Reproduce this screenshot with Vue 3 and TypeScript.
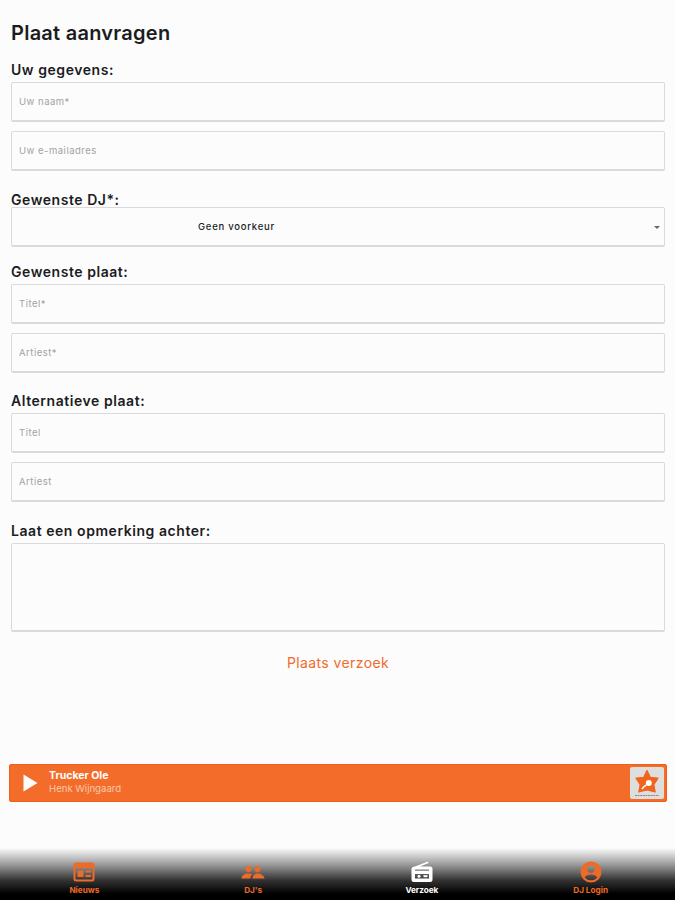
<template>
  <div class="page">
    <main class="form">
      <h1>Plaat aanvragen</h1>

      <label class="lbl first">Uw gegevens:</label>
      <input class="field" type="text" placeholder="Uw naam*" />
      <input class="field next" type="email" placeholder="Uw e-mailadres" />

      <label class="lbl dj">Gewenste DJ*:</label>
      <div class="select">
        <span>Geen voorkeur</span>
        <i class="caret"></i>
      </div>

      <label class="lbl wish">Gewenste plaat:</label>
      <input class="field" type="text" placeholder="Titel*" />
      <input class="field next" type="text" placeholder="Artiest*" />

      <label class="lbl alt">Alternatieve plaat:</label>
      <input class="field" type="text" placeholder="Titel" />
      <input class="field next" type="text" placeholder="Artiest" />

      <label class="lbl note">Laat een opmerking achter:</label>
      <textarea class="area"></textarea>

      <button class="submit" type="button">Plaats verzoek</button>
    </main>

    <section class="player">
      <svg class="play" width="15" height="18" viewBox="0 0 15 18"><path d="M0.500 0.500 L14.500 9 L0.500 17.500 Z" fill="#fff" /></svg>
      <div class="track">
        <strong>Trucker Ole</strong>
        <span>Henk Wijngaard</span>
      </div>
      <div class="logo">
        <svg width="34" height="32" viewBox="0 0 34 32">
          <path d="M17 3.500 L20.400 10.400 L28 11.200 L23.800 17.600 L25.200 25 L17 22.800 L8.800 25 L10.200 17.600 L6 11.200 L13.600 10.400 Z" fill="#f0641e" stroke="#f0641e" stroke-width="1.200" stroke-linejoin="round" />
          <circle cx="18.800" cy="16" r="3" fill="#fff" />
          <path d="M16.400 18 C14.800 18.800 13.400 20 12 22" fill="none" stroke="#fff" stroke-width="1.400" />
          <path d="M5 28.500 H29" stroke="#888" stroke-width="1.100" stroke-dasharray="2 0.600" />
        </svg>
      </div>
    </section>

    <nav class="tabs">
      <div v-for="tab in tabs" :key="tab.label" class="tab" :class="{ active: tab.active }">
        <svg width="24" height="24" viewBox="0 0 24 24" fill="currentColor" v-html="tab.icon"></svg>
        <span>{{ tab.label }}</span>
      </div>
    </nav>
  </div>
</template>

<script setup lang="ts">
interface Tab {
  label: string
  icon: string
  active?: boolean
}

const tabs: Tab[] = [
  {
    label: 'Nieuws',
    icon: '<path fill-rule="evenodd" d="M4 2.500h16A2.500 2.500 0 0 1 22.500 5v14a2.500 2.500 0 0 1-2.500 2.500H4A2.500 2.500 0 0 1 1.500 19V5A2.500 2.500 0 0 1 4 2.500ZM3.500 8v10.500c0 .6.400 1 1 1h15c.6 0 1-.4 1-1V8h-17Z" /><rect x="5.500" y="10.500" width="6" height="6.500" /><rect x="13.500" y="10.500" width="5.500" height="2" /><rect x="13.500" y="15" width="5.500" height="2" />'
  },
  {
    label: "DJ's",
    icon: '<circle cx="7.500" cy="9" r="3" /><circle cx="16.500" cy="9" r="3" /><path d="M0.500 18.500c0-3 3-5 7-5 1.500 0 2.800.3 3.900.8-1.300 1-2 2.400-2 4.200H0.500Zm11 0c0-3 2.200-5 5-5s7 2 7 5h-12Z" />'
  },
  {
    label: 'Verzoek',
    active: true,
    icon: '<path fill-rule="evenodd" d="M5 6.500 18 1.500l.6 1.500L10 6.500h10a2.500 2.500 0 0 1 2.500 2.500v10.500A2.500 2.500 0 0 1 20 22H4a2.500 2.500 0 0 1-2.500-2.500V9c0-1.300 1.300-2.300 3.500-2.500ZM5 9.500v1.200h14V9.500H5ZM5 14v4.500h14V14H5Z" /><circle cx="9" cy="16.200" r="1.500" /><rect x="13.500" y="15.200" width="4" height="2" />'
  },
  {
    label: 'DJ Login',
    icon: '<path fill-rule="evenodd" d="M12 1.500a10.500 10.500 0 1 1 0 21 10.500 10.500 0 0 1 0-21Zm0 4a3.600 3.600 0 1 0 0 7.200 3.600 3.600 0 0 0 0-7.200Zm0 9c-2.800 0-5.400 1.100-6.300 2.900a8.300 8.300 0 0 0 12.600 0c-.9-1.800-3.500-2.900-6.300-2.900Z" />'
  }
]
</script>

<style>
body {
  background: #fcfcfc;
}
</style>

<style scoped>
.page {
  width: 675px;
  height: 900px;
  display: flex;
  flex-direction: column;
  background: #fcfcfc;
  font-family: Inter, "Liberation Sans", sans-serif;
  color: #1c1c1e;
  overflow: hidden;
}

.form {
  display: flex;
  flex-direction: column;
  padding: 0 10px 0 11px;
  height: 764px;
  box-sizing: border-box;
}

h1 {
  margin: 21px 0 0;
  font-size: 20px;
  line-height: 24px;
  font-weight: 600;
  letter-spacing: 0.25px;
}

.lbl {
  font-size: 14px;
  line-height: 17px;
  font-weight: 600;
  letter-spacing: 0.55px;
}
.lbl.first { margin-top: 16px; margin-bottom: 4px; }
.lbl.dj { margin-top: 20px; margin-bottom: -1px; }
.lbl.wish { margin-top: 16px; margin-bottom: 4px; }
.lbl.alt { margin-top: 19px; margin-bottom: 4px; }
.lbl.note { margin-top: 20px; margin-bottom: 4px; }

.field,
.select,
.area {
  box-sizing: border-box;
  width: 100%;
  background: #fcfcfc;
  border: 1px solid #dadada;
  border-bottom-width: 2px;
  border-radius: 2px;
  outline: none;
  font-family: inherit;
}

.field {
  height: 40px;
  flex: none;
  padding: 0 7px;
  font-size: 9.500px;
  letter-spacing: 0.5px;
}
.field.next { margin-top: 9px; }
.field::placeholder { color: #a2a2a2; opacity: 1; }

.select {
  position: relative;
  height: 40px;
  flex: none;
  display: flex;
  align-items: center;
  padding-left: 186px;
  font-size: 9.500px;
  font-weight: 500;
  letter-spacing: 0.75px;
}

.caret {
  position: absolute;
  right: 4px;
  top: 18px;
  border-left: 3px solid transparent;
  border-right: 3px solid transparent;
  border-top: 3px solid #666;
}

.area {
  height: 89px;
  flex: none;
  resize: none;
  display: block;
}

.submit {
  align-self: center;
  margin-top: 22px;
  padding: 0;
  border: none;
  background: none;
  font-family: inherit;
  font-size: 14px;
  line-height: 18px;
  letter-spacing: 0.4px;
  color: #f26b2b;
}

.player {
  margin: 0 8px 0 9px;
  height: 38px;
  flex: none;
  display: flex;
  align-items: center;
  box-sizing: border-box;
  padding: 0 2px 0 13px;
  background: #f36c2a;
  border: 1px solid #ee6018;
  border-radius: 2px;
}

.play { flex: none; }

.track {
  display: flex;
  flex-direction: column;
  margin-left: 11px;
  margin-top: -2px;
  font-size: 9.600px;
  line-height: 13px;
  color: #fff;
}
.track strong { font-weight: 700; font-size: 10.500px; }
.track span { color: #f9c9ae; }

.logo {
  margin-left: auto;
  width: 34px;
  height: 32px;
  background: #dedede;
  border-radius: 2px;
}
.logo svg { display: block; }

.tabs {
  margin-top: auto;
  height: 52px;
  flex: none;
  display: grid;
  grid-template-columns: repeat(4, 1fr);
  background: linear-gradient(to bottom, #fcfcfc 0%, #9a9a9a 32%, #333 62%, #000 88%);
}

.tab {
  display: flex;
  flex-direction: column;
  align-items: center;
  padding-top: 12px;
  font-size: 8.200px;
  line-height: 10px;
  font-weight: 700;
  color: #ee6a28;
}
.tab svg { flex: none; }
.tab span { margin-top: 1px; }
.tab.active { color: #fff; }
</style>
